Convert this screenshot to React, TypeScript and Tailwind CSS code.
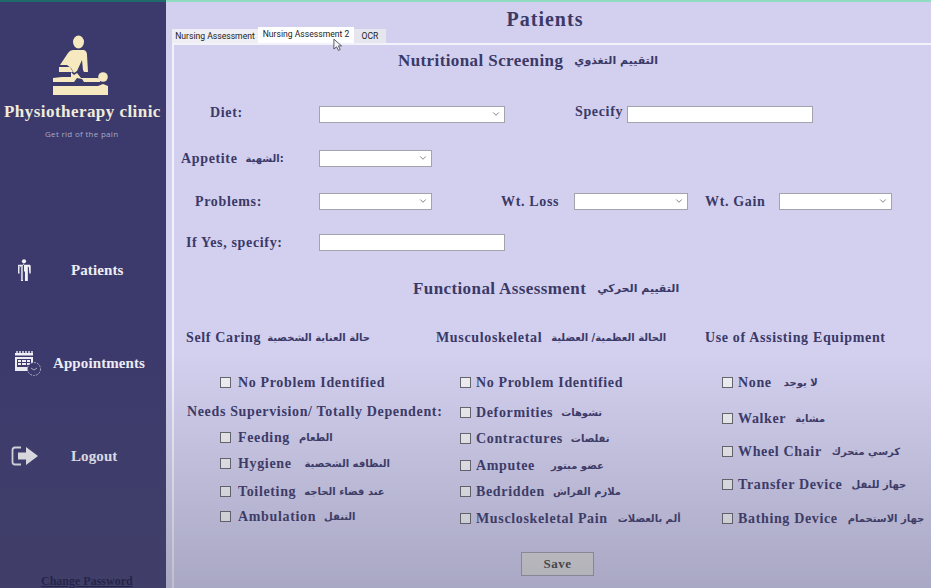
import { ChevronDown } from 'lucide-react'

const col1 = [
  { en: 'Feeding', ar: 'الطعام', gap: 'gap-[9px]', mt: 'mt-[6px]' },
  { en: 'Hygiene', ar: 'النظافه الشخصية', gap: 'gap-[13px]', mt: 'mt-[6px]' },
  { en: 'Toileting', ar: 'عند قضاء الحاجه', gap: 'gap-[8px]', mt: 'mt-[8px]' },
  { en: 'Ambulation', ar: 'التنقل', gap: 'gap-[8px]', mt: 'mt-[5px]' },
]

const col2 = [
  { en: 'No Problem Identified', ar: '', gap: 'gap-0', mt: 'mt-0' },
  { en: 'Deformities', ar: 'تشوهات', gap: 'gap-[8px]', mt: 'mt-[10px]' },
  { en: 'Contractures', ar: 'تقلصات', gap: 'gap-[8px]', mt: 'mt-[6px]' },
  { en: 'Amputee', ar: 'عضو مبتور', gap: 'gap-[16px]', mt: 'mt-[7px]' },
  { en: 'Bedridden', ar: 'ملازم الفراش', gap: 'gap-[8px]', mt: 'mt-[6px]' },
  { en: 'Muscloskeletal Pain', ar: 'ألم بالعضلات', gap: 'gap-[10px]', mt: 'mt-[7px]' },
]

const col3 = [
  { en: 'None', ar: 'لا يوجد', gap: 'gap-[12px]', mt: 'mt-0' },
  { en: 'Walker', ar: 'مشاية', gap: 'gap-[9px]', mt: 'mt-[16px]' },
  { en: 'Wheel Chair', ar: 'كرسي متحرك', gap: 'gap-[10px]', mt: 'mt-[13px]' },
  { en: 'Transfer Device', ar: 'جهاز للنقل', gap: 'gap-[9px]', mt: 'mt-[13px]' },
  { en: 'Bathing Device', ar: 'جهاز الاستحمام', gap: 'gap-[10px]', mt: 'mt-[14px]' },
]

function Logo() {
  return (
    <svg viewBox="0 0 80 80" className="h-[80px] w-[80px]" fill="#f6e9c0">
      <ellipse cx="38.5" cy="17" rx="5.5" ry="6.5" />
      <path d="M33 25h11q3 1 3 5l1 17h-4l-1-2-1-10-5 11-3 2-3-5-4-3h-7l8-12q2-3 5-3z" />
      <path d="M19 42h11l3 5H19z" />
      <path d="M31 47l3 3 3-2 4 5h16q3 0 3 3v1H44l-2-3-5-1-3 4H13v-4l9-1h9z" />
      <path d="M13 61h45l5-2 5 2v9H13z" />
      <circle cx="63" cy="52" r="4.8" />
    </svg>
  )
}

function PersonIcon() {
  return (
    <svg viewBox="0 0 14 24" className="h-[23px] w-[14px]" fill="#f1f1f6">
      <circle cx="7" cy="2.4" r="2.2" />
      <path d="M1 6h12l1 1v8h-1.4l-.6-7h-1v15H8V13H7v-8H6v18H3.800V8H3l-.6 7H.8V7z" fillRule="evenodd" />
      <path d="M2.500 7v7M5 7v15" stroke="#3c3a6c" strokeWidth="0.6" />
    </svg>
  )
}

function CalendarIcon() {
  return (
    <svg viewBox="0 0 28 26" className="h-[26px] w-[28px]">
      <rect x="1" y="3" width="18" height="18" fill="#eeeef4" />
      <path d="M3 1v4M6 1v4M9 1v4M12 1v4M15 1v4M18 1v4" stroke="#eeeef4" strokeWidth="1.400" />
      <rect x="1" y="5.500" width="18" height="1.500" fill="#3c3a6c" />
      <path d="M3 9h14v8H3z" fill="#3c3a6c" />
      <path d="M4 10h3v2H4zM8 10h4v2H8zM13 10h3v2h-3zM4 13h3v2H4zM8 13h4v2H8zM13 13h3v2h-3z" fill="#eeeef4" />
      <circle cx="20" cy="19" r="6.500" fill="#3c3a6c" stroke="#a9a8c8" strokeWidth="1" strokeDasharray="2 1" />
      <path d="M17 18l3 2 3-2" fill="none" stroke="#a9a8c8" strokeWidth="1" />
    </svg>
  )
}

function LogoutIcon() {
  return (
    <svg viewBox="0 0 28 20" className="h-[20px] w-[28px]">
      <path d="M10 1.500H4Q1.500 1.500 1.500 4v12q0 2.500 2.500 2.500h6" fill="none" stroke="#e4e4ea" strokeWidth="1.800" />
      <path d="M7 6.500h8V1l12 9-12 9v-5.500H7z" fill="#ececf0" />
    </svg>
  )
}

function Select({ width }: { width: string }) {
  return (
    <div className={`flex h-[17px] items-center justify-end border border-[#a3a3ad] bg-white pr-[3px] ${width}`}>
      <ChevronDown className="h-[10px] w-[10px] text-[#6b6b78]" />
    </div>
  )
}

function CheckBox() {
  return <span className="h-[11px] w-[11px] shrink-0 border border-[#66666e] bg-[#f1f1f4]" />
}

function Arabic({ children }: { children: string }) {
  return <span className="font-['DejaVu_Sans',sans-serif] text-[10px] font-bold tracking-normal">{children}</span>
}

function TitleArabic({ children }: { children: string }) {
  return <span className="font-['DejaVu_Sans',sans-serif] text-[11px] font-bold tracking-normal">{children}</span>
}

function CheckRow({ en, ar, gap, mt, pad, inner }: { en: string; ar: string; gap: string; mt: string; pad: string; inner: string }) {
  return (
    <div className={`flex h-5 items-center ${pad} ${inner} ${mt}`}>
      <CheckBox />
      <div className={`flex items-center ${gap}`}>
        <span>{en}</span>
        {ar && <Arabic>{ar}</Arabic>}
      </div>
    </div>
  )
}

function NavItem({ icon, label, iconBox, text, mt }: { icon: React.ReactNode; label: string; iconBox: string; text: string; mt: string }) {
  return (
    <div className={`flex h-7 items-center ${mt}`}>
      <div className={`flex shrink-0 justify-center ${iconBox}`}>{icon}</div>
      <span className={`text-[15px] font-bold tracking-[0.1px] text-[#eeeef6] ${text}`}>{label}</span>
    </div>
  )
}

export default function App() {
  return (
    <div className="relative flex h-[588px] w-[931px] overflow-hidden bg-[#d2d0ee] font-['Liberation_Serif','DejaVu_Sans',serif] text-[#3b3968]">
      <aside className="flex w-[166px] shrink-0 flex-col border-t-2 border-[#1f6b6b] bg-[#3c3a6c]">
        <div className="ml-[40px] mt-[23px]">
          <Logo />
        </div>
        <div className="mt-[-5px] whitespace-nowrap pl-[4px] text-[17px] font-bold leading-6 tracking-[0.45px] text-[#f0ecdc]">
          Physiotherapy clinic
        </div>
        <div className="mt-[4px] pl-[45px] font-['Open_Sans',sans-serif] text-[8px] leading-3 tracking-[0.3px] text-[#a8a7c6]">
          Get rid of the pain
        </div>
        <NavItem icon={<PersonIcon />} label="Patients" iconBox="w-[48px]" text="ml-[23px]" mt="mt-[119px]" />
        <NavItem icon={<CalendarIcon />} label="Appointments" iconBox="w-[53px] pl-[2px]" text="ml-0" mt="mt-[68px]" />
        <NavItem icon={<LogoutIcon />} label="Logout" iconBox="w-[50px]" text="ml-[21px]" mt="mt-[69px]" />
        <div className="ml-[41px] mt-[105px] whitespace-nowrap text-[12px] font-bold leading-4 text-[#14143f] underline">
          Change Password
        </div>
      </aside>

      <main className="flex min-w-0 flex-1 flex-col border-t-2 border-[#8fdcc0]">
        <h1 className="h-[26px] pr-[7px] text-center text-[20px] font-bold leading-[35px] tracking-[1px]">Patients</h1>

        <div className="ml-[6px] flex h-[15px] items-end whitespace-nowrap font-['Roboto',sans-serif] text-[8.6px] leading-none text-[#222]">
          <div className="flex h-[14px] w-[86px] items-center justify-center bg-[#eeeef4]">Nursing Assessment</div>
          <div className="flex h-[16px] w-[96px] items-center justify-center bg-white pb-[2px]">Nursing Assessment 2</div>
          <div className="flex h-[14px] w-[32px] items-center justify-center bg-[#e6e6ee]">OCR</div>
        </div>

        <section className="ml-[6px] flex-1 border-l-2 border-t-2 border-[#f2f2fa] text-[14px] font-bold tracking-[0.65px]">
          <h2 className="flex h-[30px] items-center gap-[11px] pl-[224px] text-[17px] leading-none tracking-[0.4px]">
            <span>Nutritional Screening</span>
            <TitleArabic>التقييم التغذوي</TitleArabic>
          </h2>

          <div className="mt-[29px] flex h-5 items-center">
            <span className="w-[145px] pb-[4px] pl-[36px]">Diet:</span>
            <Select width="w-[186px]" />
            <span className="ml-[70px] w-[52px] pb-[5px]">Specify</span>
            <div className="h-[17px] w-[186px] border border-[#a3a3ad] bg-white" />
          </div>

          <div className="mt-[24px] flex h-5 items-center">
            <span className="flex w-[145px] items-center gap-[8px] pl-[7px]">
              Appetite <Arabic>الشهية:</Arabic>
            </span>
            <Select width="w-[113px]" />
          </div>

          <div className="mt-[23px] flex h-5 items-center">
            <span className="w-[145px] pl-[21px]">Problems:</span>
            <Select width="w-[113px]" />
            <span className="ml-[69px] w-[73px]">Wt. Loss</span>
            <Select width="w-[114px]" />
            <span className="ml-[17px] w-[74px]">Wt. Gain</span>
            <Select width="w-[113px]" />
          </div>

          <div className="mt-[21px] flex h-5 items-center">
            <span className="w-[145px] pl-[12px]">If Yes, specify:</span>
            <div className="h-[17px] w-[186px] border border-[#a3a3ad] bg-white" />
          </div>

          <h2 className="mt-[26px] flex h-5 items-center gap-[11px] pl-[239px] text-[17px] leading-none tracking-[0.4px]">
            <span>Functional Assessment</span>
            <TitleArabic>التقييم الحركي</TitleArabic>
          </h2>

          <div className="mt-[29px] grid grid-cols-[262px_269px_1fr]">
            <div>
              <div className="flex h-5 items-center gap-[6px] pl-[12px]">
                Self Caring <Arabic>حالة العناية الشخصية</Arabic>
              </div>
              <div className="mt-[25px] flex h-5 items-center gap-[7px] pl-[46px]">
                <CheckBox />
                <span>No Problem Identified</span>
              </div>
              <div className="mt-[9px] flex h-5 items-center whitespace-nowrap pl-[13px]">Needs Supervision/ Totally Dependent:</div>
              {col1.map((item) => (
                <CheckRow key={item.en} {...item} pad="pl-[46px]" inner="gap-[7px]" />
              ))}
            </div>
            <div>
              <div className="flex h-5 items-center gap-[9px]">
                Musculoskeletal <Arabic>الحالة العظمية/ العضلية</Arabic>
              </div>
              <div className="mt-[25px]">
                {col2.map((item) => (
                  <CheckRow key={item.en} {...item} pad="pl-[24px]" inner="gap-[5px]" />
                ))}
              </div>
            </div>
            <div>
              <div className="flex h-5 items-center">Use of Assisting Equipment</div>
              <div className="mt-[25px]">
                {col3.map((item) => (
                  <CheckRow key={item.en} {...item} pad="pl-[17px]" inner="gap-[5px]" />
                ))}
              </div>
            </div>
          </div>

          <button className="ml-[347px] mt-[24px] flex h-[24px] w-[73px] items-center justify-center border border-[#9c9cac] bg-[#dcdcdc] text-[13px] tracking-[0.5px] text-[#444]">
            Save
          </button>
        </section>
      </main>

      {/* cursor from the screen recording */}
      <svg viewBox="0 0 10 15" className="absolute left-[333px] top-[38px] h-[14px] w-[9px]">
        <path d="M1 1v11l3-2.500 2 4 2-1-2-4h3.500z" fill="#f4f4f8" stroke="#3a3a44" strokeWidth="0.9" />
      </svg>

      {/* video fade towards the bottom edge */}
      <div className="pointer-events-none absolute inset-0 bg-gradient-to-b from-transparent from-[60%] to-[#4a4a60]/30" />
    </div>
  )
}
